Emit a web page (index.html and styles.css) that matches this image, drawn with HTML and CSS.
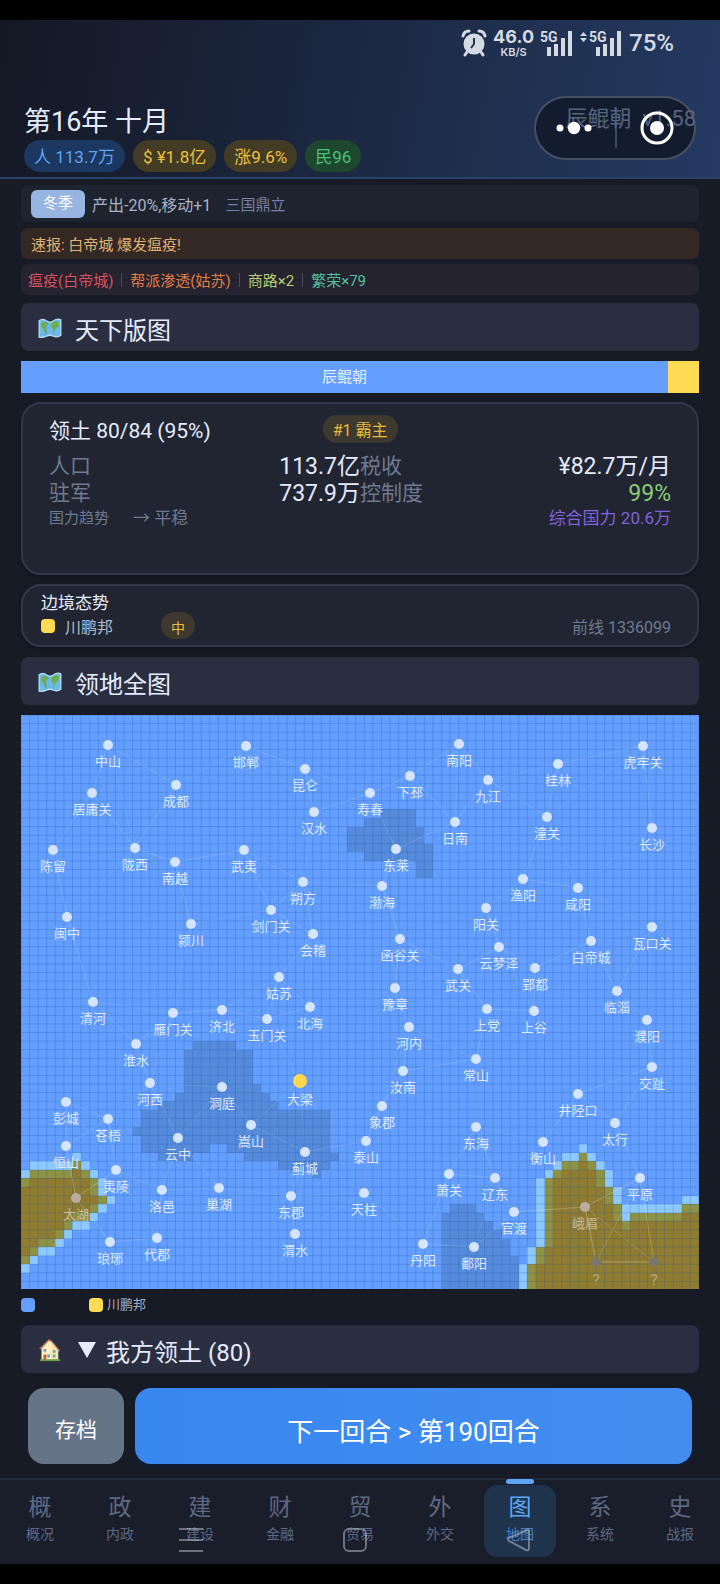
FILE: index.html
```html
<!DOCTYPE html>
<html lang="zh-CN">
<head>
	<meta charset="utf-8">
	<meta name="viewport" content="width=device-width, initial-scale=1">
	<title>天下版图</title>
	<link rel="stylesheet" href="styles.css">
</head>
<body>
	<div class="screen">
		<header class="header">
			<div class="status">
				<svg class="alarm" width="26" height="28" viewBox="0 0 26 28">
					<circle cx="13" cy="15" r="10.5" fill="#d5d9e2"/>
					<path d="M2 7Q3 2 8 2M18 2Q23 2 24 7M6 23l-2 3M20 23l2 3" stroke="#d5d9e2" stroke-width="3" fill="none" stroke-linecap="round"/>
					<path d="M13 9v6l-3 4" stroke="#22324f" stroke-width="2" fill="none"/>
				</svg>
				<div class="speed"><b>46.0</b><span>KB/S</span></div>
				<svg class="signal" width="34" height="28" viewBox="0 0 34 28">
					<text x="0" y="13" class="net">5G</text>
					<path d="M9 27v-9M16 27v-12M23 27v-18M30 27V2" stroke="#d5d9e2" stroke-width="4"/>
				</svg>
				<svg class="signal" width="43" height="28" viewBox="0 0 43 28">
					<path d="M0 7l3.500-4 3.500 4zM0 9l3.500 4 3.500-4z" fill="#d5d9e2"/>
					<text x="9" y="13" class="net">5G</text>
					<path d="M18 27v-9M25 27v-12M32 27v-18M39 27V2" stroke="#d5d9e2" stroke-width="4"/>
				</svg>
				<span class="battery">75%</span>
			</div>
			<div class="title-row">
				<h1>第16年 十月</h1>
				<span class="version">辰鲲朝&nbsp; v1.58</span>
			</div>
			<div class="pills">
				<span class="pill blue">人 113.7万</span>
				<span class="pill gold">$ ¥1.8亿</span>
				<span class="pill gold">涨9.6%</span>
				<span class="pill green">民96</span>
			</div>
			<div class="capsule">
				<button type="button" aria-label="更多">
					<svg width="36" height="16" viewBox="0 0 36 16" fill="#fff"><circle cx="4" cy="8" r="3.500"/><circle cx="18" cy="8" r="6.200"/><circle cx="32" cy="8" r="3.500"/></svg>
				</button>
				<i></i>
				<button type="button" aria-label="关闭">
					<svg width="34" height="34" viewBox="0 0 34 34"><circle cx="17" cy="17" r="15" fill="none" stroke="#fff" stroke-width="3"/><circle cx="17" cy="17" r="7" fill="#fff"/></svg>
				</button>
			</div>
		</header>

		<main class="main">
			<div class="strip season">
				<b>冬季</b><span>产出-20%,移动+1</span><em>三国鼎立</em>
			</div>
			<div class="strip news">速报: 白帝城 爆发瘟疫!</div>
			<div class="strip events">
				<span class="red">瘟疫(白帝城)</span><i></i><span class="orange">帮派渗透(姑苏)</span><i></i><span class="lime">商路×2</span><i></i><span class="teal">繁荣×79</span>
			</div>

			<h2 class="section">
				<svg class="emoji" width="26" height="20" viewBox="0 0 26 22"><use href="#icon-map"/></svg>
				天下版图
			</h2>
			<div class="share"><span class="mine">辰鲲朝</span><span class="other"></span></div>

			<section class="card realm">
				<div class="realm-head"><h3>领土 80/84 (95%)</h3><span class="tag">#1 霸主</span></div>
				<dl class="stats">
					<div><dt>人口</dt><dd>113.7亿</dd></div>
					<div><dt>税收</dt><dd>¥82.7万/月</dd></div>
					<div><dt>驻军</dt><dd>737.9万</dd></div>
					<div><dt>控制度</dt><dd class="good">99%</dd></div>
				</dl>
				<div class="trend"><small>国力趋势</small><span>→ 平稳</span><em>综合国力 20.6万</em></div>
			</section>

			<section class="card border-state">
				<h3>边境态势</h3>
				<div class="border-row"><i class="swatch yellow"></i><span class="name">川鹏邦</span><span class="tag small">中</span><em>前线 1336099</em></div>
			</section>

			<h2 class="section">
				<svg class="emoji" width="26" height="20" viewBox="0 0 26 22"><use href="#icon-map"/></svg>
				领地全图
			</h2>
			<svg class="map" id="map" viewBox="0 0 678 574"></svg>
			<div class="legend">
				<i class="swatch"></i><span class="own">辰鲲朝</span>
				<i class="swatch yellow"></i><span>川鹏邦</span>
			</div>

			<button type="button" class="section fold">
				<svg class="emoji" width="26" height="24" viewBox="0 0 26 26">
					<path d="M4 11l8-8 10 9v12H4z" fill="#f6e6a8"/>
					<path d="M12 3l3 1 8 9v2l-8-9-1 2v16H4V12z" fill="#fff0bd"/>
					<path d="M2 12L12 2l3 2 8 10" fill="none" stroke="#c8795f" stroke-width="1.500"/>
					<path d="M6 18h3v6H6z" fill="#b2564c"/>
					<path d="M6 12h3v3H6zM16 13h3v3h-3zM16 18h3v3h-3zM10 18h3v3h-3z" fill="#6aa2c5"/>
					<path d="M2 24h22" stroke="#6b9d45" stroke-width="2"/>
				</svg>
				<svg class="arrow" width="18" height="16" viewBox="0 0 18 16"><path d="M0 0h18L9 16z" fill="#e6ecff"/></svg>
				我方领土 (80)
			</button>

			<div class="actions">
				<button type="button" class="save">存档</button>
				<button type="button" class="next">下一回合 &gt; 第190回合</button>
			</div>
		</main>

		<nav class="tabs">
			<a href="#"><b>概</b><span>概况</span></a>
			<a href="#"><b>政</b><span>内政</span></a>
			<a href="#"><b>建</b><span>建设</span></a>
			<a href="#"><b>财</b><span>金融</span></a>
			<a href="#"><b>贸</b><span>贸易</span></a>
			<a href="#"><b>外</b><span>外交</span></a>
			<a href="#" class="current"><b>图</b><span>地图</span></a>
			<a href="#"><b>系</b><span>系统</span></a>
			<a href="#"><b>史</b><span>战报</span></a>
			<div class="sysbar">
				<svg width="26" height="26" viewBox="0 0 26 26"><path d="M1 2h24M1 13h24M1 24h24"/></svg>
				<svg width="26" height="26" viewBox="0 0 26 26"><rect x="2" y="2" width="22" height="22" rx="5"/></svg>
				<svg width="26" height="26" viewBox="0 0 26 26"><path d="M22 2.500L3 11q-2 1.500 0 3l17 9q3 1 3-1.500V4q0-1-1-1.500z"/></svg>
			</div>
		</nav>
	</div>

	<svg width="0" height="0" class="defs">
		<symbol id="icon-map" viewBox="0 0 26 22">
			<path d="M1 3q4-3 8 0t8 0 8-1v17q-4 3-8 1t-8 0-8 1z" fill="#6db9e8" stroke="#b5dcf4" stroke-width="1.500"/>
			<path d="M4 5l5-1 3 3-3 2-1 3 2 3-2 3-2-5-3-4zM15 6l4-3 4 2-1 5-3 1-1 4-2-3-2-3z" fill="#6fae45"/>
			<path d="M9 3v17M17 3v17" stroke="#4f9dcd" stroke-width="1" opacity=".5"/>
		</symbol>
	</svg>
	<script src="map.js"></script>
</body>
</html>
```
FILE: styles.css
```css
*{margin: 0;padding: 0;box-sizing: border-box;}
body {
	background: #000;
	color: #e6ecff;
	font-family: Roboto, "Noto Sans CJK SC", sans-serif;
	font-size: 16px;
}
h1,h2,h3,b {font-weight: 400;}
i,em {font-style: normal;}
button {
	border: 0;
	font-family: inherit;
	color: inherit;
	cursor: pointer;
}
a {text-decoration: none;}
.defs {position: absolute;}
.screen {
	margin: 20px 0;
	background: #171b26;
}

/* 顶部 */
.header {
	position: relative;
	padding: 6px 24px 5px;
	background: linear-gradient(100deg, #141824 0%, #1b2740 45%, #243a62 100%);
	border-bottom: 2px solid #2a4268;
}
.status {
	display: flex;
	align-items: center;
	justify-content: flex-end;
	gap: 6px;
	height: 34px;
	padding-right: 22px;
	color: #d5d9e2;
}
.speed {
	display: flex;
	flex-direction: column;
	align-items: center;
}
.speed b {
	font: 700 18px/18px Inter, sans-serif;
}
.speed span {
	font: 600 11px/12px Inter, sans-serif;
}
.signal {overflow: visible;}
.net {
	font: 700 14px Roboto, sans-serif;
	fill: #d5d9e2;
}
.battery {
	font: 500 24px/30px Roboto, sans-serif;
}
.title-row {
	display: flex;
	align-items: center;
	justify-content: space-between;
	height: 36px;
	margin-top: 44px;
}
.title-row h1 {
	font-size: 27px;
	line-height: 36px;
}
.version {
	position: relative;
	z-index: 1;
	padding-bottom: 6px;
	font-size: 22px;
	line-height: 28px;
	color: #56637d;
}
.pills {
	display: flex;
	gap: 8px;
}
.pill {
	height: 32px;
	padding: 0 10px;
	border-radius: 16px;
	font-size: 17px;
	line-height: 34px;
}
.blue {background: #1c3860;color: #5ca6f5;}
.gold {background: #433b24;color: #ecc03f;}
.green {background: #1e472f;color: #4bc076;}
.capsule {
	position: absolute;
	top: 76px;
	right: 24px;
	display: flex;
	align-items: center;
	justify-content: center;
	gap: 23px;
	width: 162px;
	height: 64px;
	border: 2px solid rgba(150,160,180,.4);
	border-radius: 32px;
	background: #121c2e;
}
.capsule button {
	position: relative;
	z-index: 2;
	display: flex;
	background: none;
}
.capsule i {
	width: 2px;
	height: 40px;
	background: #3e4a60;
}

/* 主体 */
.main {
	display: flex;
	flex-direction: column;
	padding: 6px 21px 14px;
}
.strip {
	display: flex;
	align-items: center;
	height: 31px;
	margin-bottom: 5px;
	padding: 0 10px;
	border-radius: 7px;
	font-size: 15px;
}
.season {
	height: 37px;
	margin-bottom: 6px;
	background: #1e242f;
	color: #aab2c4;
}
.season b {
	height: 28px;
	padding: 0 12px;
	border-radius: 6px;
	background: #97b5e0;
	color: #fff;
	line-height: 26px;
}
.season span {
	margin: 0 14px 0 7px;
	font-size: 16px;
}
.season em {color: #7480a4;}
.news {
	background: #332823;
	color: #e0b274;
}
.events {
	padding: 0 7px;
	margin-bottom: 8px;
	background: #24232f;
}
.events i {
	width: 1px;
	height: 14px;
	margin: 0 8px;
	background: #4a4d60;
}
.red {color: #d45360;}
.orange {color: #e27c45;}
.lime {color: #b8cc70;}
.teal {color: #52c0a0;}
.section {
	display: flex;
	align-items: center;
	height: 48px;
	margin-bottom: 10px;
	padding: 2px 16px 0;
	border-radius: 8px;
	background: #292f41;
	font-size: 24px;
	text-align: left;
}
.emoji {margin-right: 12px;}
.share {
	display: flex;
	height: 32px;
	margin-bottom: 9px;
	font-size: 15px;
	line-height: 32px;
	text-align: center;
}
.mine {
	flex: 646;
	background: #649fff;
}
.other {
	flex: 31;
	background: #ffdb54;
}
.card {
	border: 2px solid #323849;
	border-radius: 20px;
	background: #202531;
	box-shadow: 0 2px 4px rgba(0,0,0,.3);
}
.realm {
	min-height: 173px;
	margin-bottom: 9px;
	padding: 9px 26px;
}
.realm-head {
	display: flex;
	align-items: center;
	height: 32px;
}
.realm-head h3 {
	width: 44%;
	font-size: 21px;
}
.tag {
	height: 28px;
	padding: 0 10px;
	border-radius: 14px;
	background: #3d392f;
	color: #e8bb3a;
	font-size: 16px;
	line-height: 32px;
}
.stats {
	display: grid;
	grid-template-columns: 1fr 1fr;
	margin-top: 8px;
	line-height: 27px;
}
.stats div {
	display: flex;
	align-items: center;
	justify-content: space-between;
	height: 27px;
}
.stats dt {
	font-size: 21px;
	color: #6f7990;
}
.stats dd {
	font-size: 23px;
}
.stats .good {color: #8acb76;}
.trend {
	display: flex;
	align-items: center;
	height: 22px;
	color: #6f7990;
	font-size: 17px;
	line-height: 22px;
}
.trend small {
	font-size: 15px;
	margin-right: 24px;
}
.trend em {
	margin-left: auto;
	color: #8262dc;
}
.border-state {
	height: 63px;
	margin-bottom: 10px;
	padding: 5px 26px 0 18px;
}
.border-state h3 {
	font-size: 17px;
	line-height: 24px;
}
.border-row {
	display: flex;
	align-items: center;
	height: 21px;
	color: #b4bccf;
}
.swatch {
	width: 14px;
	height: 14px;
	border-radius: 4px;
	background: #649fff;
}
.yellow {background: #ffdb54;}
.border-row .name {
	width: 96px;
	margin-left: 10px;
}
.small {
	height: 27px;
	font-size: 14px;
	line-height: 32px;
}
.border-row em {
	margin-left: auto;
	color: #6f7990;
}

/* 地图 */
.map {
	display: block;
	width: 100%;
	height: auto;
	background: #649fff;
}
.map .fog {fill: #568bdc;}
.map .glow {fill: #8dc8ff;}
.map .enemy {fill: #907c31;}
.map .edge {fill: #8d9244;}
.map .grid {
	stroke: #1d4c98;
	stroke-opacity: .22;
	fill: none;
}
.map .road {
	stroke: #fff;
	stroke-opacity: .07;
}
.map .road.far {stroke-opacity: .14;}
.map .dot {fill: #d5e5ff;}
.map .capital {fill: #ffd84e;}
.map .dim {fill: #b9ada2;}
.map .unknown {fill: #78776d;}
.map text {
	font-size: 13px;
	fill: #dfeaff;
	text-anchor: middle;
}
.map text.dim {fill: #cbbd98;}
.map text.unknown {
	font-size: 15px;
	fill: #b8aa7c;
}
.legend {
	display: flex;
	align-items: center;
	height: 14px;
	margin: 9px 0 13px;
	color: #a8afbf;
	font-size: 13px;
	line-height: 14px;
}
.legend span {margin: 0 11px 0 4px;}
.legend .own {color: #1b1c22;}
.fold {
	width: 100%;
	margin-bottom: 15px;
}
.arrow {
	margin: 0 10px 0 3px;
}
.actions {
	display: flex;
	gap: 11px;
	padding: 0 7px;
}
.actions button {
	height: 76px;
	border-radius: 16px;
	color: #fff;
}
.actions .save {
	width: 96px;
	padding-top: 4px;
	background: #667488;
	font-size: 21px;
}
.actions .next {
	flex: 1;
	padding-top: 6px;
	background: linear-gradient(90deg, #3787ef, #438df0);
	box-shadow: 0 3px 4px #10203c;
	font-size: 26px;
}

/* 底部导航 */
.tabs {
	position: relative;
	display: flex;
	height: 86px;
	padding-top: 5px;
	border-top: 2px solid #20283a;
	background: #1a1e2a;
}
.tabs a {
	position: relative;
	flex: 1;
	display: flex;
	flex-direction: column;
	align-items: center;
	height: 72px;
	margin: 0 4px;
	border-radius: 14px;
	color: #5d6884;
}
.tabs b {
	margin-top: 7px;
	font-size: 23px;
	line-height: 32px;
}
.tabs span {
	font-size: 14px;
	line-height: 20px;
}
.tabs .current {
	background: #20334d;
	color: #5ca6f5;
}
.tabs .current:before {
	position: absolute;
	top: -6px;
	width: 28px;
	height: 5px;
	border-radius: 3px;
	background: #5ca6f5;
	content: "";
}
.tabs .current span {color: #4580c4;}
.sysbar {
	position: absolute;
	left: 0;
	right: 10px;
	bottom: 11px;
	display: flex;
	justify-content: center;
	gap: 138px;
	pointer-events: none;
}
.sysbar svg {
	fill: none;
	stroke: rgba(190,195,205,.5);
	stroke-width: 2;
}
```
FILE: map.js
```js
var COLS = 79, ROWS = 67, CELL = 678 / COLS;
var svg = document.getElementById('map');

// 名称, x, y, 类型
var cities = [
	['中山',87,30],['邯郸',225,31],['昆仑',284,54],['成都',155,70],['居庸关',71,78],['汉水',293,97],
	['陈留',32,135],['陇西',114,133],['南越',154,147],['武夷',223,135],['朔方',282,167],['剑门关',250,195],
	['闽中',46,202],['颍川',170,209],['会稽',292,219],['姑苏',258,262],['清河',72,287],
	['南阳',438,29],['下邳',389,61],['寿春',349,78],['九江',467,65],['桂林',537,49],['虎牢关',622,31],
	['日南',434,107],['潼关',526,102],['长沙',631,113],['东莱',375,134],['渤海',361,171],['渔阳',502,164],
	['咸阳',557,173],['阳关',465,193],['函谷关',379,224],['云梦泽',478,232],['瓦口关',631,212],
	['白帝城',570,226],['武关',437,254],['郢都',514,253],['豫章',374,273],['临淄',596,276],
	['雁门关',152,298],['济北',201,295],['玉门关',246,304],['北海',289,292],['淮水',115,329],
	['河西',129,368],['洞庭',201,372],['大梁',279,366,'capital'],['彭城',45,387],['苍梧',87,404],
	['云中',157,423],['嵩山',230,410],['蓟城',284,437],['恒山',45,431],['夷陵',95,455],['太湖',55,483,'dim'],
	['洛邑',141,475],['巢湖',198,473],['东郡',270,481],['琅琊',89,527],['代郡',136,523],['渭水',274,519],
	['上党',466,294],['上谷',513,296],['河内',388,312],['濮阳',626,305],['汝南',382,356],['常山',455,344],
	['交趾',631,352],['象郡',361,391],['井陉口',557,379],['泰山',345,426],['东海',455,412],['太行',594,408],
	['衡山',522,427],['萧关',428,459],['辽东',474,463],['平原',619,463],['天柱',343,478],['官渡',493,497],
	['峨眉',564,492,'dim'],['丹阳',402,529],['鄱阳',453,532],['?',575,547,'unknown'],['?',633,547,'unknown']
];

// 行, 起始列, 结束列
var enemy = [
	[52,6,6],[53,1,7],[54,0,8],[55,0,8],[56,0,9],[57,0,8],[58,0,7],[59,0,5],[60,0,4],[61,0,3],[62,0,1],[63,0,0],
	[51,65,65],[52,63,66],[53,62,67],[54,61,67],[55,61,68],[56,61,68],[57,61,69],[57,77,78],[58,61,69],[58,71,78],
	[59,61,78],[60,61,78],[61,61,78],[62,60,78],[63,60,78],[64,59,78],[65,59,78],[66,59,78]
];
var fog = [
	[11,42,45],[12,40,45],[13,38,46],[14,38,46],[15,38,47],[16,40,47],[17,46,47],[18,46,47],
	[38,20,24],[39,19,26],[40,19,26],[41,19,26],[42,19,26],[43,19,27],[44,18,28],[45,16,29],[46,14,35],[47,14,35],
	[48,13,35],[49,14,35],[50,14,21],[50,24,35],[51,16,19],[51,26,36],[52,30,35],[53,34,34],
	[57,50,52],[58,49,53],[59,49,54],[60,49,55],[61,49,56],[62,49,56],[63,49,57],[64,49,57],[65,49,57],[66,49,57]
];

function add(tag, attrs, text) {
	var el = document.createElementNS('http://www.w3.org/2000/svg', tag);
	for (var k in attrs) {
		el.setAttribute(k, attrs[k]);
	}
	if (text) el.textContent = text;
	svg.appendChild(el);
}

var cells = {};
function mark(list, name) {
	list.forEach(function(r){
		for (var c = r[1]; c <= r[2]; c++) {
			cells[r[0] + ',' + c] = name;
		}
	});
}
mark(fog, 'fog');
mark(enemy, 'enemy');

function isEnemy(r, c) {
	return cells[r + ',' + c] == 'enemy';
}

// 同类格子合并成一条 path
var paths = {fog: '', glow: '', enemy: '', edge: ''};
for (var r = 0; r < ROWS; r++) {
	for (var c = 0; c < COLS; c++) {
		var near = [[r-1,c],[r+1,c],[r,c-1],[r,c+1]].filter(function(n){
			return n[0] >= 0 && n[0] < ROWS && n[1] >= 0 && n[1] < COLS;
		});
		var count = near.filter(function(n){ return isEnemy(n[0], n[1]); }).length;
		var kind = cells[r + ',' + c];
		if (kind == 'enemy') {
			kind = count < near.length ? 'edge' : 'enemy';
		} else if (count > 0) {
			kind = 'glow';
		}
		if (kind) {
			paths[kind] += 'M' + c + ' ' + r + 'h1v1h-1z';
		}
	}
}
for (var name in paths) {
	add('path', {'class': name, d: paths[name], transform: 'scale(' + CELL + ')', 'shape-rendering': 'crispEdges'});
}

var grid = '';
for (var i = 0; i <= COLS; i++) grid += 'M' + i * CELL + ' 0V574';
for (var i = 0; i <= ROWS; i++) grid += 'M0 ' + i * CELL + 'H678';
add('path', {'class': 'grid', d: grid});

// 每座城连接最近的三座城
cities.forEach(function(a){
	cities.filter(function(b){ return b != a; }).sort(function(m, n){
		return Math.hypot(m[1]-a[1], m[2]-a[2]) - Math.hypot(n[1]-a[1], n[2]-a[2]);
	}).slice(0, 3).forEach(function(b){
		var far = a[3] == 'unknown' || a[3] == 'dim';
		add('line', {'class': far ? 'road far' : 'road', x1: a[1], y1: a[2], x2: b[1], y2: b[2]});
	});
});

cities.forEach(function(c){
	var type = c[3] || '';
	if (type == 'unknown') {
		add('path', {'class': type, d: 'M' + c[1] + ' ' + (c[2]-6) + 'l6 6-6 6-6-6z'});
	} else {
		add('circle', {'class': 'dot ' + type, cx: c[1], cy: c[2], r: type == 'capital' ? 7 : 5});
	}
	add('text', {'class': type == 'capital' ? '' : type, x: c[1], y: c[2] + (type == 'unknown' || type == 'capital' ? 23 : 21)}, c[0]);
});
```
